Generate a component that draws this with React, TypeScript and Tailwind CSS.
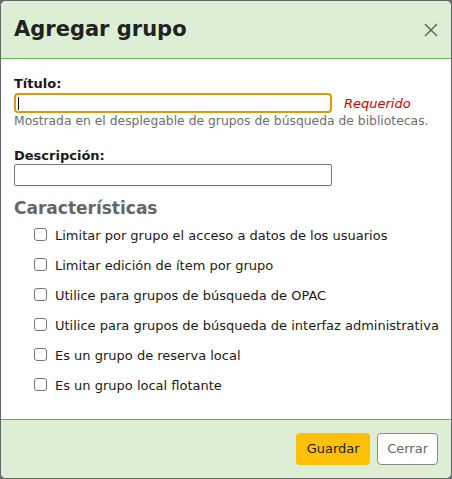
import React from 'react';

const features = [
  'Limitar por grupo el acceso a datos de los usuarios',
  'Limitar edición de ítem por grupo',
  'Utilice para grupos de búsqueda de OPAC',
  'Utilice para grupos de búsqueda de interfaz administrativa',
  'Es un grupo de reserva local',
  'Es un grupo local flotante',
];

export default function App() {
  return (
    <div className="w-[452px] h-[479px] bg-[#6b6b6b] font-['DejaVu_Sans',sans-serif] text-[#1a1a1a]">
      <div className="w-full h-full flex flex-col bg-white border border-[#666] rounded-[6px] overflow-hidden">
        {/* header */}
        <div className="h-[58px] shrink-0 flex items-center justify-between pl-[13px] pr-[13px] bg-[#dcefd4] border-b border-[#6ab143]">
          <h1 className="text-[21px] font-bold text-[#222]">Agregar grupo</h1>
          <svg width="14" height="14" viewBox="0 0 14 14">
            <path d="M1 1 L13 13 M13 1 L1 13" stroke="#666" strokeWidth="1.5" />
          </svg>
        </div>

        {/* body */}
        <div className="flex-1 pl-[13px] pr-[13px] pt-[17px] text-[13px] whitespace-nowrap">
          <label className="block font-bold leading-[15px]">Título:</label>
          <div className="flex items-center mt-[2px]">
            <div className="relative">
              <input
                type="text"
                className="block w-[318px] h-[20px] border-2 border-[#e09a00] rounded-[4px] outline-none px-[2px]"
              />
              <span className="absolute left-[4px] top-[4px] w-[1px] h-[13px] bg-black" />
            </div>
            <span className="ml-[12px] italic text-[#cc0000] leading-[15px]">Requerido</span>
          </div>
          <p className="mt-[1px] leading-[15px] text-[12.35px] text-[#6e6e6e]">
            Mostrada en el desplegable de grupos de búsqueda de bibliotecas.
          </p>

          <label className="block font-bold leading-[15px] mt-[19px]">Descripción:</label>
          <input
            type="text"
            className="block mt-[1px] w-[318px] h-[22px] border border-[#767676] rounded-[2px] outline-none"
          />

          <h2 className="mt-[12px] text-[17px] leading-[20px] font-bold text-[#666]">Características</h2>
          <ul className="mt-[2px] pl-[20px]">
            {features.map((f) => (
              <li key={f} className="h-[30px] flex items-center gap-[8px]">
                <input
                  type="checkbox"
                  className="appearance-none shrink-0 w-[13px] h-[13px] border border-[#767676] rounded-[3px] bg-white -mt-[2px]"
                />
                <span className="leading-[15px]">{f}</span>
              </li>
            ))}
          </ul>
        </div>

        {/* footer */}
        <div className="h-[59px] shrink-0 flex justify-end items-start gap-[7px] pt-[13px] pr-[13px] bg-[#dcefd4] border-t border-[#6ab143] text-[13px]">
          <button className="h-[32px] px-[10.5px] bg-[#ffc107] rounded-[4px] text-[#1a1a1a]">Guardar</button>
          <button className="h-[32px] px-[9px] bg-white border border-[#8a8a8a] rounded-[4px] text-[#666]">Cerrar</button>
        </div>
      </div>
    </div>
  );
}
